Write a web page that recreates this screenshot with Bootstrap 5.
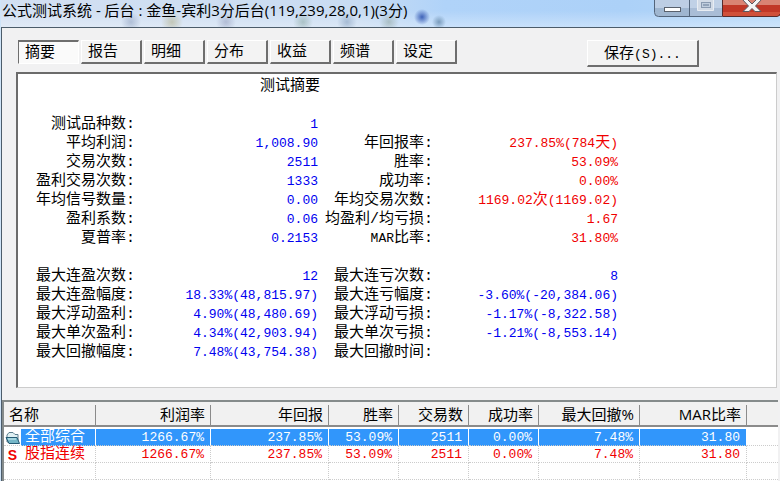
<!DOCTYPE html>
<html lang="zh-CN">
<head>
<meta charset="utf-8">
<meta name="viewport" content="width=device-width, initial-scale=1">
<title>公式测试系统</title>
<link href="https://cdn.jsdelivr.net/npm/bootstrap@5.3.0/dist/css/bootstrap.min.css" rel="stylesheet">
<style>
  body { background: #f1f1f2; color: #000; font: 15px/19px "Liberation Mono", "Noto Sans CJK SC", monospace; }
  .app-window { border-left: 1px solid #cfe4f8; overflow: hidden; }
  .app-inner { border-left: 1px solid #4c5c6a; }
  .title-bar { height: 28px; border-bottom: 1px solid #4c5c6a; background: linear-gradient(180deg, #00000000 40%, #ffffff55), linear-gradient(90deg, #d3e0f2, #c9dcf2 45%, #b0d3f9 57%, #acd1f8 80%, #b4d7f8); }
  .title-text { font: 15px/20px "Open Sans", "Noto Sans CJK SC", sans-serif; padding-left: 1px; white-space: nowrap; }
  .title-glow { background: radial-gradient(circle 8px at 421px 17px, #3e62b8, #3e62b800), radial-gradient(circle 7px at 438px 22px, #7a9cbd, #7a9cbd00), radial-gradient(circle 10px at 130px 22px, #8a9cbc88, #8a9cbc00), radial-gradient(circle 11px at 171px 22px, #b3b28f99, #b3b28f00), radial-gradient(circle 10px at 225px 22px, #9099b988, #9099b900), radial-gradient(circle 10px at 302px 22px, #83a39d88, #83a39d00), radial-gradient(circle 10px at 346px 22px, #7d98b888, #7d98b800), radial-gradient(circle 10px at 388px 22px, #8ba09a88, #8ba09a00); }
  .caption-btn { border: 0; padding: 0; background: none; height: 17px; line-height: 0; }
  .caption-btn svg { display: block; }
  .tool-row { padding: 12px 0 5px 16px; }
  .tab-strip { gap: 2px; }
  .tab-btn, .save-btn { background: #f3f3f3; border: 1px solid #fff; border-right: 2px solid #6e6e6e; border-bottom: 2px solid #6e6e6e; color: #000; border-radius: 0; padding: 0; }
  .tab-btn { width: 61px; height: 24px; line-height: 19px; text-align: left; padding: 2px 0 0 6px; }
  .tab-btn.active { border: 1px solid #fff; border-top: 2px solid #6e6e6e; border-left: 1px solid #6e6e6e; background: #fafafa; }
  .save-btn { width: 112px; height: 27px; margin-right: 81px; padding-top: 2px; }
  .half { font-size: 13px; }
  .report { background: #fff; border: 1px solid #ccc; border-top: 2px solid #6b6b6b; border-left: 2px solid #6b6b6b; margin: 0 3px 12px 14px; padding-top: 3px; min-height: 316px; }
  .report-title { padding-left: 242px; }
  .report table { width: 600px; table-layout: fixed; margin-top: 19px; }
  .report th, .report td { padding: 0; height: 19px; font-weight: 400; text-align: right; white-space: nowrap; }
  .report td { font-size: 13px; color: #0000f0; }
  .report td.up, .hot td { color: #f00000; }
  .cjk { font-size: 15px; }
  .c-label { width: 117px; } .c-value { width: 183px; } .c-label2 { width: 115px; }
  .list-box { border-top: 2px solid #858b8b; border-left: 2px solid #858b8b; margin-right: 2px; background: #fff; }
  .list-box table { width: 100%; table-layout: fixed; border-collapse: separate; border-spacing: 0; }
  .list-box thead th { background: #f1f1f1; font: 15px/22px "Open Sans", "Noto Sans CJK SC", sans-serif; height: 25px; padding: 0 6px 0 0; border-bottom: 2px solid #8b8b8b; text-align: right; background-image: linear-gradient(#8b8b8b, #8b8b8b); background-size: 1px 20px; background-position: right 3px; background-repeat: no-repeat; }
  .list-box thead th:first-child { text-align: left; padding-left: 5px; }
  .list-box thead th:last-child { background-image: none; }
  .list-box td { height: 17px; padding: 2px 6px 0 0; font-size: 13px; line-height: 14px; text-align: right; border-right: 1px dotted #ccc; border-bottom: 1px dotted #ccc; white-space: nowrap; }
  .list-box td:first-child { font-size: 15px; text-align: left; padding: 2px 0 0; }
  .list-box td:last-child { border-right: 0; }
  .list-box .gap-row td { height: 2px; padding: 0; border: 0; line-height: 0; }
  .picked td { background: #3196fb; color: #fff; border-right-color: #fff; border-right-style: solid; }
  .picked td:first-child { background: linear-gradient(90deg, #fff 17px, #3196fb 17px); }
  .picked td:last-child { background: #fff; }
  .row-icon { width: 17px; flex: none; }
  .row-mark { font: bold 14px/14px "Liberation Sans", sans-serif; text-align: center; }
</style>
<script src="https://cdn.jsdelivr.net/npm/bootstrap@5.3.0/dist/js/bootstrap.bundle.min.js"></script>
</head>
<body>
<div class="app-window min-vh-100 d-flex flex-column">
  <header class="title-bar">
    <div class="title-glow h-100 d-flex justify-content-between align-items-start">
      <div class="title-text">公式测试系统 - 后台 : 金鱼-宾利3分后台(119,239,28,0,1)(3分)</div>
      <div class="d-flex flex-shrink-0">
        <button class="caption-btn" type="button" aria-label="最小化"><svg width="36" height="17" viewBox="0 0 36 17"><path d="M.5 0V12.500q0 4 4 4H35.500V0" fill="#bdcee4"/><path d="M1 8H35V16H4Q1 16 1 12Z" fill="#9fb6d0"/><path d="M.5 0V12.500q0 4 4 4H36M35.500 0V16" fill="none" stroke="#53657b"/><rect x="10.500" y="7.500" width="16" height="4" fill="#fff" stroke="#59616c"/></svg></button>
        <button class="caption-btn" type="button" aria-label="最大化"><svg width="32" height="17" viewBox="0 0 32 17"><path d="M0 0H32V16H0Z" fill="#c0d1e6"/><path d="M0 8H32V16H0Z" fill="#a9bdd6"/><path d="M0 16.500H32" stroke="#53657b"/><path d="M7.500 0V10.500H23.500V0" fill="#d2dbe6" stroke="#e8edf3"/><rect x="11.500" y="2.500" width="9" height="5" fill="#c0cede" stroke="#8a9bb1"/><rect x="13.500" y="4.500" width="5" height="1" fill="#eef" stroke="#93a4b9"/></svg></button>
        <button class="caption-btn" type="button" aria-label="关闭"><svg width="58" height="17" viewBox="0 0 58 17"><path d="M0 0H58V16H0Z" fill="#d98373"/><path d="M0 5H58V16H0Z" fill="#c13727"/><path d="M0 12H58V16H0Z" fill="#d0503a"/><path d="M.5 0V16.500H55Q57 16.500 58 14" fill="none" stroke="#572b2b"/><path d="M25 -1L30 4L35 -1H40L33.500 6L39 11.500H33L30 8.500L27 11.500H21L26.500 6L20 -1Z" fill="#f4f4f4" stroke="#5b5961"/></svg></button>
      </div>
    </div>
  </header>

  <main class="app-inner flex-grow-1 d-flex flex-column">
    <div class="tool-row d-flex justify-content-between align-items-start">
      <div class="tab-strip d-flex" role="tablist">
        <button class="tab-btn active" type="button" role="tab" aria-selected="true">摘要</button>
        <button class="tab-btn" type="button" role="tab">报告</button>
        <button class="tab-btn" type="button" role="tab">明细</button>
        <button class="tab-btn" type="button" role="tab">分布</button>
        <button class="tab-btn" type="button" role="tab">收益</button>
        <button class="tab-btn" type="button" role="tab">频谱</button>
        <button class="tab-btn" type="button" role="tab">设定</button>
      </div>
      <button class="save-btn" type="button">保存<span class="half">(S)...</span></button>
    </div>

    <section class="report">
      <div class="report-title">测试摘要</div>
      <table>
        <colgroup><col class="c-label"><col class="c-value"><col class="c-label2"><col></colgroup>
        <tbody>
          <tr><th scope="row">测试品种数:</th><td>1</td><td></td><td></td></tr>
          <tr><th scope="row">平均利润:</th><td>1,008.90</td><th scope="row">年回报率:</th><td class="up">237.85%(784<span class="cjk">天</span>)</td></tr>
          <tr><th scope="row">交易次数:</th><td>2511</td><th scope="row">胜率:</th><td class="up">53.09%</td></tr>
          <tr><th scope="row">盈利交易次数:</th><td>1333</td><th scope="row">成功率:</th><td class="up">0.00%</td></tr>
          <tr><th scope="row">年均信号数量:</th><td>0.00</td><th scope="row">年均交易次数:</th><td class="up">1169.02<span class="cjk">次</span>(1169.02)</td></tr>
          <tr><th scope="row">盈利系数:</th><td>0.06</td><th scope="row">均盈利/均亏损:</th><td class="up">1.67</td></tr>
          <tr><th scope="row">夏普率:</th><td>0.2153</td><th scope="row"><span class="half">MAR</span>比率:</th><td class="up">31.80%</td></tr>
        </tbody>
        <tbody>
          <tr><td colspan="4"></td></tr>
          <tr><th scope="row">最大连盈次数:</th><td>12</td><th scope="row">最大连亏次数:</th><td>8</td></tr>
          <tr><th scope="row">最大连盈幅度:</th><td>18.33%(48,815.97)</td><th scope="row">最大连亏幅度:</th><td>-3.60%(-20,384.06)</td></tr>
          <tr><th scope="row">最大浮动盈利:</th><td>4.90%(48,480.69)</td><th scope="row">最大浮动亏损:</th><td>-1.17%(-8,322.58)</td></tr>
          <tr><th scope="row">最大单次盈利:</th><td>4.34%(42,903.94)</td><th scope="row">最大单次亏损:</th><td>-1.21%(-8,553.14)</td></tr>
          <tr><th scope="row">最大回撤幅度:</th><td>7.48%(43,754.38)</td><th scope="row">最大回撤时间:</th><td></td></tr>
        </tbody>
      </table>
    </section>

    <section class="list-box flex-grow-1">
      <table>
        <colgroup><col style="width:92px"><col style="width:115px"><col style="width:118px"><col style="width:70px"><col style="width:70px"><col style="width:70px"><col style="width:101px"><col style="width:107px"><col></colgroup>
        <thead><tr><th>名称</th><th>利润率</th><th>年回报</th><th>胜率</th><th>交易数</th><th>成功率</th><th>最大回撤%</th><th>MAR比率</th><th></th></tr></thead>
        <tbody>
          <tr class="gap-row"><td colspan="9"></td></tr>
          <tr class="picked"><td><div class="d-flex align-items-center"><svg class="row-icon" width="17" height="14" viewBox="0 1 17 14"><path d="M3 12V5L5 2.500H9L11 4.500H14V12Z" fill="#dff0f3" stroke="#5c7d8d"/><path d="M2 7.500H13L15.500 13.500H5Z" fill="#76b7c8" stroke="#245a74"/><path d="M4 9H12" stroke="#d5f4f7"/></svg><span class="ps-1">全部综合</span></div></td><td>1266.67%</td><td>237.85%</td><td>53.09%</td><td>2511</td><td>0.00%</td><td>7.48%</td><td>31.80</td><td></td></tr>
          <tr class="hot"><td><div class="d-flex align-items-center"><span class="row-icon row-mark">S</span><span class="ps-1">股指连续</span></div></td><td>1266.67%</td><td>237.85%</td><td>53.09%</td><td>2511</td><td>0.00%</td><td>7.48%</td><td>31.80</td><td></td></tr>
          <tr><td></td><td></td><td></td><td></td><td></td><td></td><td></td><td></td><td></td></tr>
        </tbody>
      </table>
    </section>
  </main>
</div>
</body>
</html>
